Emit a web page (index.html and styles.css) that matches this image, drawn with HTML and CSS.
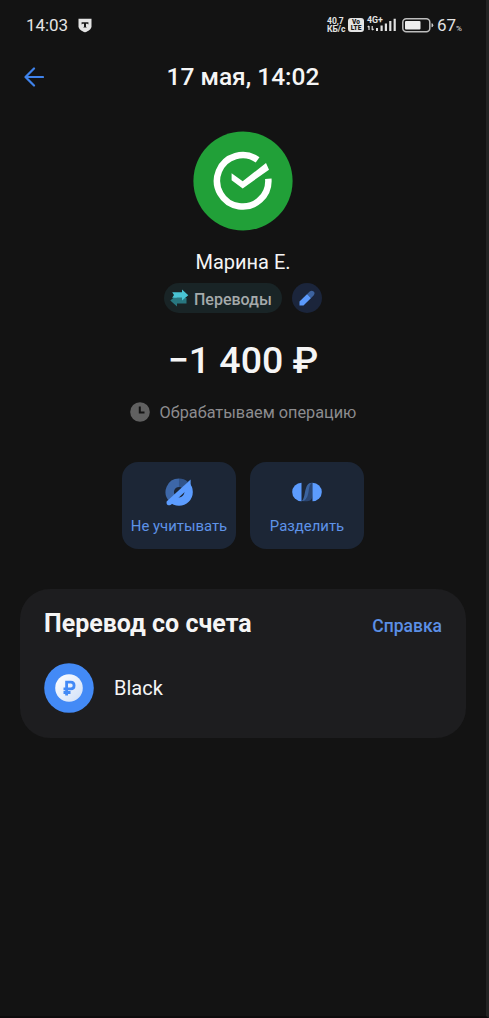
FILE: index.html
```html
<!DOCTYPE html>
<html lang="ru">
<head>
<meta charset="utf-8">
<meta name="viewport" content="width=device-width, initial-scale=1">
<title>Операция</title>
<link rel="stylesheet" href="styles.css">
</head>
<body>
<div class="screen">
  <div class="status-bar">
    <span class="clock">14:03</span>
    <svg class="shield" width="14" height="15" viewBox="0 0 14 15"><path d="M.5.8h13v7.400c0 3-3.300 5-6.500 6.100C3.800 13.200.5 11.200.5 8.200z" fill="#e4e4e4"/><path d="M3.600 4.300h6.800v2.300l-1-.8H8v3l.9.8H5.100l.9-.8v-3H4.600l-1 .8z" fill="#181818"/></svg>
    <div class="indicators">
      <span class="speed"><span>40,7</span><span>КБ/с</span></span>
      <span class="volte"><span>Vo</span><span>LTE</span></span>
      <span class="network"><span class="gen">4G+</span>
        <svg width="30" height="14" viewBox="0 0 30 14"><path d="M2 8v4M.7 9.200 2 7.800M5.200 8v4M6.600 10.800l-1.400 1.400" stroke="#ddd" stroke-width="1.200" fill="none"/><path d="M9 10h2v3H9zM13.500 7.500h2.200V13h-2.200zM17.800 5.500H20V13h-2.200zM22.200 3h2.200v10h-2.200zM26.600.8h2.200V13h-2.200z" fill="#e2e2e2"/></svg>
      </span>
      <svg class="battery" width="32" height="15" viewBox="0 0 32 15"><rect x=".8" y=".8" width="27" height="13" rx="3.500" fill="none" stroke="#bdbdbd" stroke-width="1.500"/><rect x="3" y="3" width="15.500" height="8.600" rx="1" fill="#eee"/><path d="M29.500 5.300q1.800 0 1.800 2t-1.800 2z" fill="#c8c8c8"/></svg>
      <span class="percent">67<small>%</small></span>
    </div>
  </div>

  <header class="nav">
    <svg class="back" width="20" height="20" viewBox="0 0 20 20"><path d="M19 10H2M10 1.500 1.500 10l8.500 8.500" fill="none" stroke="#3f82ea" stroke-width="2.200" stroke-linejoin="round" stroke-linecap="round"/></svg>
    <h1 class="title"><span>17 мая, 14:02</span></h1>
  </header>

  <main>
    <svg class="avatar" width="100" height="100" viewBox="0 0 100 100"><circle cx="50" cy="50" r="49.600" fill="#21a038"/><path d="M64.600 28.900A25.700 25.700 0 1 0 75.300 47.800" fill="none" stroke="#fff" stroke-width="6.500"/><path d="M38.600 42.300v7L49.700 57.400 76 38.700l-3-6.600L49.700 50.200z" fill="#fff"/></svg>
    <div class="name"><span>Марина Е.</span></div>
    <div class="tags">
      <div class="chip">
        <svg width="19" height="18" viewBox="0 0 19 18"><path d="M.3 11.500 6.800 6v3h9.700v5.400H7V17.500z" fill="#287780"/><path d="M2.200 3.200H12V.4l6.300 5.800L12 11.600V8.800H2.200L4 6z" fill="#49c4d4"/></svg>
        <span class="chip-label">Переводы</span>
      </div>
      <div class="edit"><svg width="16" height="16" viewBox="0 0 16 16"><path d="M.5 15.500v-4L8.200 4l3.900 3.900-7.600 7.600z" fill="#5b9afd"/><path d="M8.200 4l2.500-2.500q2-1.500 3.900 0t0 3.900l-2.500 2.500z" fill="#3d639f"/></svg></div>
    </div>
    <div class="amount"><span>−1 400 ₽</span></div>
    <div class="state">
      <svg width="20" height="20" viewBox="0 0 20 20"><circle cx="10" cy="10" r="9.800" fill="#606060"/><path d="M9.800 4.500v6h4.700" fill="none" stroke="#131313" stroke-width="2"/></svg>
      <span>Обрабатываем операцию</span>
    </div>
    <div class="actions">
      <button class="action">
        <svg width="30" height="30" viewBox="0 0 30 30"><path d="M8.500 21.500A9.200 9.200 0 0 1 15 5.800" fill="none" stroke="#3d67a8" stroke-width="8.400"/><path d="M15 5.800a9.200 9.200 0 0 1 6 2.200" fill="none" stroke="#31548a" stroke-width="8.400"/><path d="M21.800 8.200A9.500 9.500 0 0 1 8.200 21.800" fill="none" stroke="#5c9cff" stroke-width="8.400"/><path d="M26.600 2.400v7L7 27.800q-5 2-4.400-3.200z" fill="#5c9cff"/></svg>
        <span>Не учитывать</span>
      </button>
      <button class="action">
        <svg width="30" height="30" viewBox="0 0 30 30"><path d="M9.500 24.200c4 0 5.500-2 5.500-7V13c0-5 1.500-7.200 5.500-7.200V17c0 5-1.500 7.200-5.500 7.200z" fill="#2b4672"/><path d="M9.500 24.200c4 0 5.500-2.200 7-9.200 1-6 1.500-8.500 4-9.200-5 0-6 3-7.500 9.200-1 5-1.500 8-3.500 9.200z" fill="#3b639f"/><path d="M9.500 5.700A9.300 9.300 0 0 0 9.500 24.300z" fill="#5c9cff"/><path d="M20.500 5.700A9.300 9.300 0 0 1 20.500 24.300z" fill="#5c9cff"/></svg>
        <span>Разделить</span>
      </button>
    </div>

    <section class="card">
      <div class="card-head"><h2>Перевод со счета</h2><a class="help">Справка</a></div>
      <div class="account">
        <svg width="50" height="50" viewBox="0 0 50 50"><defs><linearGradient id="coin" x1="0" y1="0" x2="1" y2="1"><stop offset="0" stop-color="#fff"/><stop offset="1" stop-color="#cfdff8"/></linearGradient></defs><circle cx="25" cy="25" r="24.800" fill="#438af6"/><circle cx="25" cy="25" r="13.800" fill="url(#coin)"/><path d="M22.600 32.500V19.200h4.200q3.300 0 3.300 3.300t-3.300 3.400h-7.300M19.500 29.500h7" fill="none" stroke="#438af6" stroke-width="2.800"/></svg>
        <span class="account-name">Black</span>
      </div>
    </section>
  </main>
</div>
</body>
</html>
```
FILE: styles.css
```css
* { box-sizing: border-box; }
body { margin: 0; background: #131313; color: #f5f5f5; font-family: Roboto, "Liberation Sans", sans-serif; }
svg { display: block; flex: none; }
span, h2, a { white-space: nowrap; }
.screen { height: 1018px; border-right: 3px solid #232323; border-bottom: 2px solid #0d0b0c; overflow: hidden; }
.status-bar { height: 50px; padding: 0 23px 0 26px; display: flex; align-items: center; color: #e4e4e4; }
.clock { font-size: 17px; width: 42px; letter-spacing: -.1px; }
.shield { margin-left: 10px; }
.indicators { margin-left: auto; display: flex; align-items: center; }
.speed { display: flex; flex-direction: column; font-size: 8.500px; line-height: 8px; font-weight: 700; width: 21px; }
.volte { display: flex; flex-direction: column; align-items: center; justify-content: center; width: 16px; height: 14px; border-radius: 3px; background: #e4e4e4; color: #171717; font-size: 6.500px; line-height: 6px; font-weight: 900; }
.network { width: 30px; height: 16px; margin-left: 3px; display: grid; }
.network > * { grid-area: 1 / 1; }
.network svg { margin-top: 1px; }
.gen { font-size: 8.800px; line-height: 8px; font-weight: 700; margin-top: -1px; }
.battery { margin-left: 5px; }
.percent { font-size: 17px; margin-left: 3px; width: 26px; }
.percent small { font-size: 8px; }
.nav { height: 54px; display: grid; grid-template-columns: 45px 1fr 45px; align-items: center; }
.back { margin-left: 24px; }
.title { margin: 0; text-align: center; font-size: 24.500px; line-height: 30px; font-weight: 500; }
main { display: flex; flex-direction: column; align-items: center; }
.avatar { margin-top: 27px; }
.name { margin-top: 17px; font-size: 20px; line-height: 28px; }
.tags { margin-top: 7px; display: flex; gap: 10px; }
.chip { width: 118px; height: 30px; border-radius: 15px; padding-left: 6px; display: flex; align-items: center; gap: 5px; background: #192426; color: #a5aaab; font-size: 16px; font-weight: 500; }
.chip-label { padding-top: 2px; }
.edit { width: 30px; height: 30px; border-radius: 50%; background: #1b253b; display: grid; place-items: center; }
.amount { margin-top: 22px; font-size: 37.500px; line-height: 50px; font-weight: 500; }
.state { margin-top: 16px; height: 22px; display: flex; align-items: center; gap: 10px; color: #8c8c8f; font-size: 16.300px; }
.actions { margin-top: 38.500px; display: flex; gap: 14px; }
.action { width: 114px; height: 87px; border: 0; border-radius: 16px; padding: 15px 0 0; background: #1c2636; color: #5e93e8; font: 14.900px Roboto, sans-serif; display: flex; flex-direction: column; align-items: center; gap: 10px; }
.card { align-self: stretch; height: 149px; margin: 40px 20px 0; border-radius: 30px; padding: 18.500px 24px 0 24px; background: #1d1d1f; }
.card-head { display: flex; justify-content: space-between; align-items: center; height: 34px; }
h2 { margin: 0; font-size: 25px; line-height: 34px; font-weight: 700; }
.help { color: #5b8fe5; font-size: 17.500px; font-weight: 500; padding-top: 3px; }
.account { margin-top: 21.500px; display: flex; align-items: center; gap: 20px; font-size: 20px; }
```
